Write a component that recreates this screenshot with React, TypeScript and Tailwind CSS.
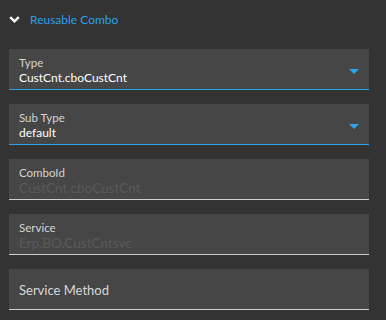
type Field = {
  label: string;
  value?: string;
  kind: "select" | "disabled" | "empty";
};

const fields: Field[] = [
  { label: "Type", value: "CustCnt.cboCustCnt", kind: "select" },
  { label: "Sub Type", value: "default", kind: "select" },
  { label: "ComboId", value: "CustCnt.cboCustCnt", kind: "disabled" },
  { label: "Service", value: "Erp.BO.CustCntsvc", kind: "disabled" },
  { label: "Service Method", kind: "empty" },
];

function Caret() {
  return (
    <svg width="10" height="5" viewBox="0 0 10 5" className="mt-[20px] shrink-0">
      <path d="M0 0h10L5 5z" fill="#2aa3ef" />
    </svg>
  );
}

function Chevron() {
  return (
    <svg width="11" height="7" viewBox="0 0 11 7" className="shrink-0">
      <path d="M1.2 1.2 5.5 5.3 9.8 1.2" fill="none" stroke="#ffffff" strokeWidth="2.4" />
    </svg>
  );
}

export default function App() {
  return (
    <main
      className="h-[320px] w-[386px] overflow-hidden bg-[#333333] pl-[9px] pr-[17px]"
      style={{ fontFamily: "Lato, 'Open Sans', sans-serif" }}
    >
      <div className="flex h-[38px] items-center gap-[10px] pt-[1px]">
        <Chevron />
        <span className="text-[12px] text-[#2c9fec]">Reusable Combo</span>
      </div>

      <div className="mt-[11px] flex flex-col gap-[14px]">
        {fields.map((f) => (
          <div
            key={f.label}
            className={`flex h-[41px] items-start bg-[#464646] px-[10px] border-b ${
              f.kind === "select" ? "border-[#2aa3ef]" : "border-[#cfcfcf]"
            }`}
          >
            {f.kind === "empty" ? (
              <span className="pt-[13px] text-[13px] leading-[16px] text-[#d6d6d6]">{f.label}</span>
            ) : (
              <div className="flex min-w-0 flex-1 flex-col pt-[7px]">
                <span className="text-[11.5px] leading-[14px] text-[#d4d4d4]">{f.label}</span>
                <span
                  className={`leading-[16px] ${
                    f.kind === "select" ? "text-[12px] text-white" : "text-[13.5px] text-[#5a5a5a]"
                  }`}
                >
                  {f.value}
                </span>
              </div>
            )}
            {f.kind === "select" && <Caret />}
          </div>
        ))}
      </div>
    </main>
  );
}
